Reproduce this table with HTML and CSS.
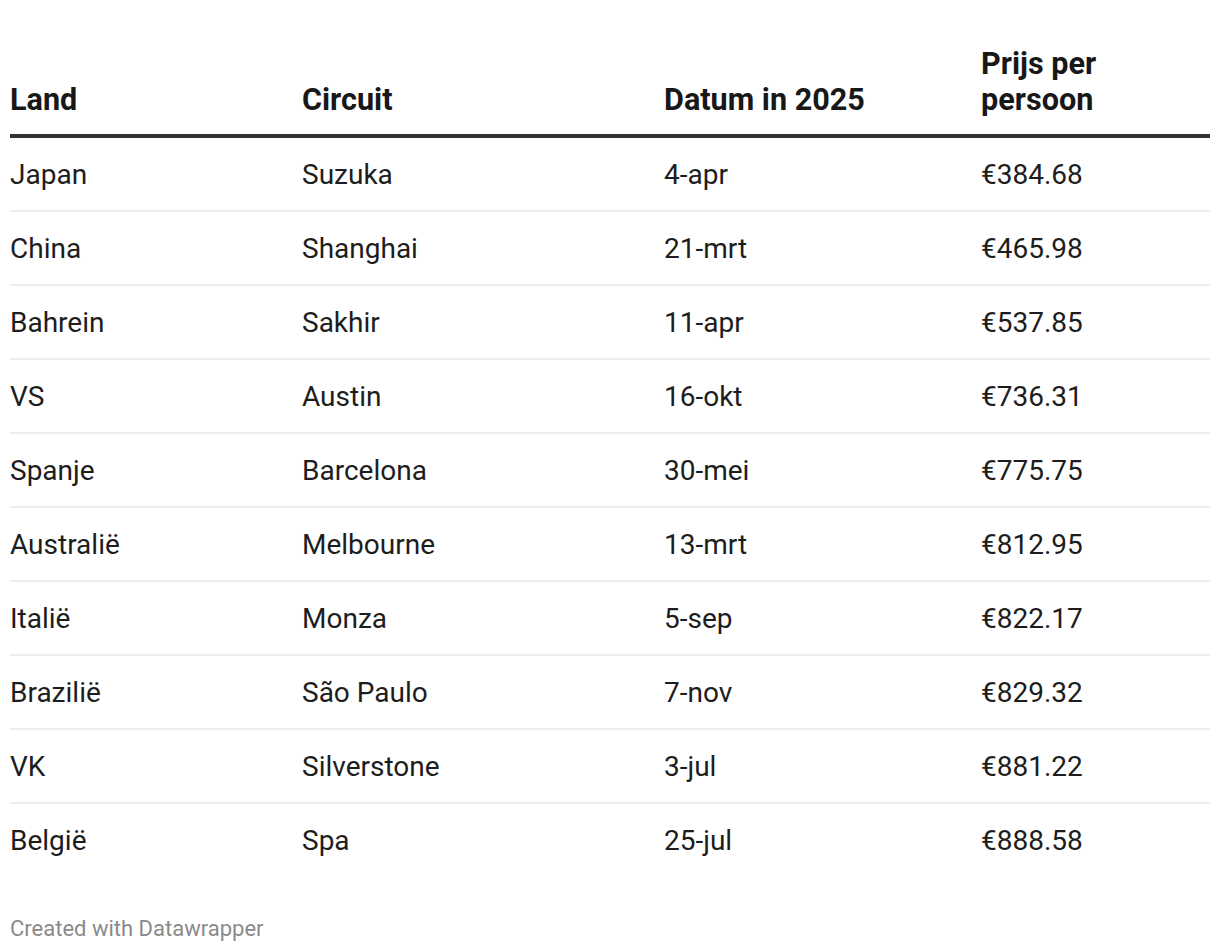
FILE: index.html
```html
<!DOCTYPE html>
<html lang="nl">
<head>
<meta charset="utf-8">
<title>F1 tickets</title>
<link rel="stylesheet" href="styles.css">
</head>
<body>
<div class="chart">
  <table class="dw-table">
    <colgroup>
      <col class="c1"><col class="c2"><col class="c3"><col class="c4">
    </colgroup>
    <thead>
      <tr>
        <th>Land</th>
        <th>Circuit</th>
        <th>Datum in 2025</th>
        <th>Prijs per<br>persoon</th>
      </tr>
    </thead>
    <tbody>
      <tr><td>Japan</td><td>Suzuka</td><td>4-apr</td><td>€384.68</td></tr>
      <tr><td>China</td><td>Shanghai</td><td>21-mrt</td><td>€465.98</td></tr>
      <tr><td>Bahrein</td><td>Sakhir</td><td>11-apr</td><td>€537.85</td></tr>
      <tr><td>VS</td><td>Austin</td><td>16-okt</td><td>€736.31</td></tr>
      <tr><td>Spanje</td><td>Barcelona</td><td>30-mei</td><td>€775.75</td></tr>
      <tr><td>Australië</td><td>Melbourne</td><td>13-mrt</td><td>€812.95</td></tr>
      <tr><td>Italië</td><td>Monza</td><td>5-sep</td><td>€822.17</td></tr>
      <tr><td>Brazilië</td><td>São Paulo</td><td>7-nov</td><td>€829.32</td></tr>
      <tr><td>VK</td><td>Silverstone</td><td>3-jul</td><td>€881.22</td></tr>
      <tr><td>België</td><td>Spa</td><td>25-jul</td><td>€888.58</td></tr>
    </tbody>
  </table>
  <div class="footer">Created with Datawrapper</div>
</div>
</body>
</html>
```
FILE: styles.css
```css
html, body {
  margin: 0;
  padding: 0;
  background: #ffffff;
}
body {
  font-family: Roboto, "Liberation Sans", Arial, sans-serif;
  color: #181818;
}
.chart {
  padding: 46px 10px 0 10px;
}
.dw-table {
  width: 1200px;
  border-collapse: collapse;
  table-layout: fixed;
}
.c1 { width: 292px; }
.c2 { width: 362px; }
.c3 { width: 317px; }
.c4 { width: 229px; }
.dw-table th {
  text-align: left;
  vertical-align: bottom;
  font-weight: 700;
  font-size: 30.6px;
  line-height: 36px;
  padding: 0 0 16px 0;
  border-bottom: 4px solid #333333;
  color: #181818;
}
.dw-table td {
  font-size: 28px;
  line-height: 36px;
  padding: 19px 0 17px 0;
  border-bottom: 2px solid #eeeeee;
  color: #1d1d1d;
}
.dw-table tbody tr:last-child td {
  border-bottom: none;
}
.footer {
  margin-top: 39px;
  font-size: 22px;
  line-height: 28px;
  color: #8a8a8a;
}
```
